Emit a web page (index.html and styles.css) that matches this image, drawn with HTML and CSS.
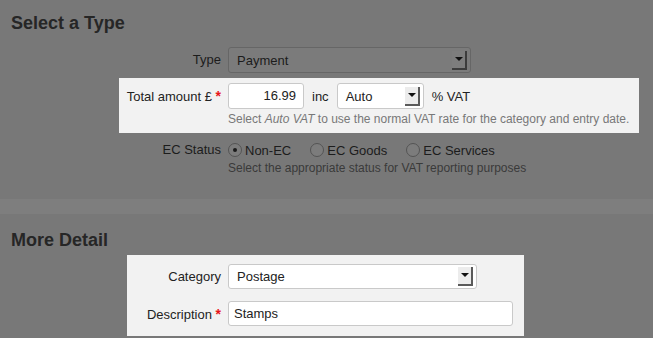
FILE: index.html
```html
<!DOCTYPE html>
<html lang="en">
<head>
  <meta charset="UTF-8" />
  <meta name="viewport" content="width=device-width, initial-scale=1.0" />
  <title>New Entry</title>
  <link rel="stylesheet" href="styles.css">
</head>
<body>
  <div class="section first">
    <h2>Select a Type</h2>

    <div class="row row-type">
      <label class="lbl">Type</label>
      <div class="select sel-type"><span>Payment</span><i class="arrow"></i></div>
    </div>

    <div class="hl hl-amount">
      <div class="row">
        <label class="lbl">Total amount £ <b class="req">*</b></label>
        <div class="field">
          <div class="inline">
            <div class="input amount">16.99</div>
            <span class="word">inc</span>
            <div class="select sel-vat"><span>Auto</span><i class="arrow"></i></div>
            <span class="word">% VAT</span>
          </div>
          <p class="help">Select <em>Auto VAT</em> to use the normal VAT rate for the category and entry date.</p>
        </div>
      </div>
    </div>

    <div class="row row-ec">
      <label class="lbl">EC Status</label>
      <div class="field">
        <div class="radios">
          <span class="radio checked"></span><span class="opt">Non-EC</span>
          <span class="radio"></span><span class="opt">EC Goods</span>
          <span class="radio"></span><span class="opt">EC Services</span>
        </div>
        <p class="help">Select the appropriate status for VAT reporting purposes</p>
      </div>
    </div>
  </div>

  <div class="band"></div>

  <div class="section second">
    <h2>More Detail</h2>

    <div class="hl hl-detail">
      <div class="row">
        <label class="lbl">Category</label>
        <div class="select sel-cat"><span>Postage</span><i class="arrow"></i></div>
      </div>
      <div class="row row-desc">
        <label class="lbl">Description <b class="req">*</b></label>
        <div class="input desc">Stamps</div>
      </div>
    </div>
  </div>
</body>
</html>
```

FILE: styles.css
```css
body {
  margin: 0;
  background-color: #787878;
  font-family: "Liberation Sans", Arial, sans-serif;
  font-size: 13px;
  color: #1c1c1c;
}
h2 {
  margin: 0 0 0 11px;
  font-size: 18px;
  line-height: 21px;
  color: #262626;
}
.section.first {
  padding-top: 13px;
  height: 186px;
}
.band {
  height: 15px;
  background-color: #7e7e7e;
}
.section.second {
  padding-top: 16px;
  height: 124px;
}
.row {
  display: flex;
  align-items: flex-start;
  gap: 7px;
}
.lbl {
  width: 221px;
  text-align: right;
  line-height: 26px;
  flex-shrink: 0;
}
.req {
  color: #e8161b;
  font-size: 14px;
}
.row-type {
  margin-top: 13px;
}
.hl {
  background-color: #f2f2f2;
  color: #222;
}
.hl-amount {
  margin: 5px 0 0 119px;
  width: 514px;
  padding: 5px 0 6px 6px;
}
.hl-amount .lbl {
  width: 96px;
}
.hl-detail {
  margin: 4px 0 0 127px;
  width: 397px;
  padding: 9px 0 8px 0;
}
.hl-detail .lbl {
  width: 94px;
}
.row-desc {
  margin-top: 11px;
}
.inline {
  display: flex;
  align-items: center;
}
.word {
  margin: 0 8px;
}
.select {
  box-sizing: border-box;
  height: 26px;
  border: 1px solid #666;
  border-radius: 3px;
  background-color: #7b7b7b;
  display: flex;
  align-items: center;
  justify-content: space-between;
  padding: 0 3px 0 8px;
}
.hl .select {
  background-color: #fff;
  border-color: #c9c9c9;
}
.sel-type {
  width: 243px;
}
.sel-vat {
  width: 87px;
}
.sel-cat {
  width: 249px;
  height: 25px;
}
.arrow {
  position: relative;
  box-sizing: border-box;
  width: 15px;
  height: 19px;
  background-color: #7d7d7d;
  border-right: 2px solid #3c3c3c;
  border-bottom: 2px solid #3c3c3c;
}
.hl .arrow {
  background-color: #ececec;
  border-color: #5a5a5a;
}
.arrow::after {
  content: "";
  position: absolute;
  left: 3px;
  top: 6px;
  border-left: 4px solid transparent;
  border-right: 4px solid transparent;
  border-top: 4px solid #111;
}
.input {
  box-sizing: border-box;
  height: 26px;
  border: 1px solid #c9c9c9;
  border-radius: 3px;
  background-color: #fff;
  line-height: 24px;
}
.amount {
  width: 76px;
  text-align: right;
  padding-right: 7px;
}
.desc {
  width: 285px;
  height: 25px;
  line-height: 23px;
  padding-left: 5px;
}
.help {
  margin: 3px 0 0;
  font-size: 12px;
  line-height: 15px;
  color: #787878;
}
.row-ec {
  margin-top: 8px;
}
.row-ec .lbl {
  line-height: 18px;
}
.row-ec .help {
  margin-top: 2px;
  color: #3a3a3a;
}
.radios {
  display: flex;
  align-items: center;
  height: 18px;
}
.radio {
  box-sizing: border-box;
  width: 14px;
  height: 14px;
  border: 1px solid #545454;
  border-radius: 50%;
  background-color: #7c7c7c;
  margin-right: 3px;
  position: relative;
}
.radio.checked::after {
  content: "";
  position: absolute;
  left: 4px;
  top: 4px;
  width: 4px;
  height: 4px;
  border-radius: 50%;
  background-color: #1a1a1a;
}
.opt {
  margin-right: 19px;
}
```
